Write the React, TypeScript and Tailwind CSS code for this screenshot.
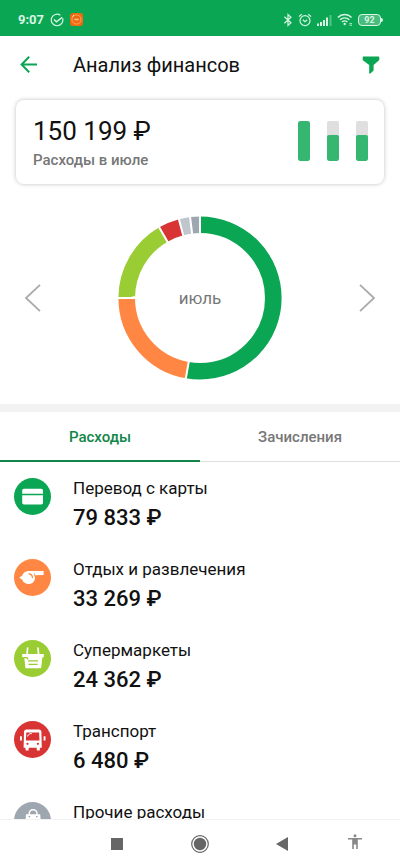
import { useState } from "react";
import type { ReactNode } from "react";

type Category = {
  name: string;
  amount?: string;
  color: string;
  icon: ReactNode;
};

const segments = [
  { color: "#0ba653", from: 0, to: 190 },
  { color: "#ff8743", from: 190, to: 270 },
  { color: "#9acc33", from: 270, to: 330 },
  { color: "#d93434", from: 330, to: 345 },
  { color: "#c0c6ce", from: 345, to: 353 },
  { color: "#9ea7b0", from: 353, to: 360 },
];

const months = [
  { id: "may", label: "Май", fill: 100 },
  { id: "june", label: "Июнь", fill: 64 },
  { id: "july", label: "Июль", fill: 64 },
];

const categories: Category[] = [
  {
    name: "Перевод с карты",
    amount: "79 833 ₽",
    color: "bg-[#0ba653]",
    icon: (
      <g fill="#fff">
        <path d="M10 10.7h17.2a1.8 1.8 0 0 1 1.8 1.8v3.3H8.2v-3.3a1.8 1.8 0 0 1 1.8-1.8z" />
        <path d="M8.2 17.3H29v7.4a1.8 1.8 0 0 1-1.8 1.8H10a1.8 1.8 0 0 1-1.8-1.8z" />
      </g>
    ),
  },
  {
    name: "Отдых и развлечения",
    amount: "33 269 ₽",
    color: "bg-[#ff8743]",
    icon: (
      <>
        <path
          d="M5.2 18.8 8.2 16.6A7 7 0 0 1 14.2 12H29.6v3.9l-8.8.4a6.6 6.6 0 0 1-12.7 4.2z"
          fill="#fff"
        />
        <path
          d="M14.6 14.6a4.6 4.6 0 0 1 3.9 4.4"
          fill="none"
          stroke="#ff8743"
          strokeWidth="1.3"
        />
        <path d="M20.4 14.3v3" stroke="#ff8743" strokeWidth="0.8" />
      </>
    ),
  },
  {
    name: "Супермаркеты",
    amount: "24 362 ₽",
    color: "bg-[#9acc33]",
    icon: (
      <>
        <path
          d="M13.6 8 13 15M24 8l.6 7"
          fill="none"
          stroke="#fff"
          strokeWidth="1.7"
          strokeLinecap="round"
        />
        <path
          d="M8.2 14h21.6v3.2h-1.4l-1.2 10.2a1 1 0 0 1-1 .9H12.4a1 1 0 0 1-1-.9L10.2 17.2h-2z"
          fill="#fff"
        />
        <path
          d="M9.4 17.6h3.6l1 1.8M14 20.8h10M14.4 24.4h9.2"
          fill="none"
          stroke="#9acc33"
          strokeWidth="1.3"
        />
      </>
    ),
  },
  {
    name: "Транспорт",
    amount: "6 480 ₽",
    color: "bg-[#d93434]",
    icon: (
      <>
        <path
          d="M12.6 8.5h12.2a2.6 2.6 0 0 1 2.6 2.6l.4 15.7h-1.9v1.6a1.2 1.2 0 0 1-1.2 1.2h-.8a1.2 1.2 0 0 1-1.2-1.2v-1.6h-8v1.6a1.2 1.2 0 0 1-1.2 1.2h-.8a1.2 1.2 0 0 1-1.2-1.2v-1.6H9.6L10 11.1a2.6 2.6 0 0 1 2.6-2.6zM6 15.2h1.9v4.2H6zM29.6 15.2h1.9v4.2h-1.9z"
          fill="#fff"
        />
        <path d="M12.3 11.4h12.8l.4 8.2H11.9z" fill="#d93434" />
        <path d="m13 15.4 3-2.8h1.8" fill="none" stroke="#fff" strokeWidth="1" />
        <circle cx="13.5" cy="22.8" r="1.1" fill="#d93434" />
        <circle cx="23.9" cy="22.8" r="1.1" fill="#d93434" />
      </>
    ),
  },
  {
    name: "Прочие расходы",
    color: "bg-[#9ea7b0]",
    icon: (
      <>
        <path d="M12 12.2h14.2L27.4 27H10.8z" fill="#fff" />
        <path
          d="M15.2 13.4v-1.8a3.9 3.9 0 0 1 7.8 0v1.8"
          fill="none"
          stroke="#fff"
          strokeWidth="1.5"
        />
        <path d="M14.6 14.6h1.6M22 14.6h1.6" stroke="#9ea7b0" strokeWidth="1.3" />
      </>
    ),
  },
];

function StatusBar() {
  return (
    <div className="flex h-9 shrink-0 items-center justify-between bg-[#0ba653] pr-[17px] pl-[18px] pt-[3px] text-[#d8f5e3]">
      <div className="flex items-center gap-1.5">
        <span className="text-[13px] leading-4 font-bold">9:07</span>
        <svg viewBox="0 0 14 14" className="size-3.5" fill="none" stroke="currentColor">
          <path d="M12.6 5.2A5.8 5.8 0 1 1 10.4 2.2" strokeWidth="1.2" />
          <path d="m4 6.6 2.4 2.2 5.8-4.4" strokeWidth="1.4" />
        </svg>
        <svg viewBox="0 0 13 13" className="size-[13px]">
          <rect width="13" height="13" rx="3" fill="#f0690f" />
          <circle cx="6.5" cy="6.5" r="4.6" fill="none" stroke="#ffb27c" strokeWidth="0.8" />
          <path d="M4.4 6.5h4.2" stroke="#ffc79e" strokeWidth="1.5" />
          <path d="m2.4 3.6 1.6-1.4" stroke="#fff" strokeWidth="0.9" />
        </svg>
      </div>
      <div className="flex items-center gap-[5px]">
        <svg viewBox="0 0 10 14" className="h-3.5 w-2.5" fill="none" stroke="currentColor">
          <path d="m1.4 3.8 6.6 6L5 12.4V1.6l3 2.6-6.6 6" strokeWidth="1.2" />
        </svg>
        <svg viewBox="0 0 14 14" className="size-3.5" fill="none" stroke="currentColor">
          <circle cx="7" cy="7.6" r="5" strokeWidth="1.2" />
          <path d="m4.8 6.8 2.2 2 2.2-2M.9 3.6l2.8-2.4M13.1 3.6l-2.8-2.4" strokeWidth="1.2" />
        </svg>
        <svg viewBox="0 0 15 12" className="h-3 w-[15px]" fill="currentColor">
          <path d="M0 9.5h2V12H0zM3 8h2v4H3zM6 6h2v6H6zM9 3.5h2V12H9z" />
          <path d="M12.5 1h2v11h-2z" opacity="0.35" />
        </svg>
        <svg viewBox="0 0 16 13" className="h-[13px] w-4" fill="none" stroke="currentColor">
          <path
            d="M.8 4.4a9.8 9.8 0 0 1 13.8 0M3 6.8a6.6 6.6 0 0 1 9.4 0M5.1 9a3.6 3.6 0 0 1 5.2 0"
            strokeWidth="1.4"
          />
          <circle cx="7.7" cy="11" r="1.2" fill="currentColor" stroke="none" />
          <path d="M12.4 10.6h2.6M12.4 12.2h2.6" strokeWidth="0.8" />
        </svg>
        <div className="flex items-center">
          <span className="flex h-3 w-[23px] items-center justify-center rounded-[4px] border border-current bg-white/25 pt-px text-[9px] leading-[10px] font-bold">
            92
          </span>
          <span className="h-1 w-0.5 rounded-r-sm bg-current" />
        </div>
      </div>
    </div>
  );
}

function Header() {
  return (
    <header className="flex h-[58px] shrink-0 items-center pr-5 pl-5">
      <button type="button" aria-label="Назад" className="mr-[35px] text-[#0ba653]">
        <svg viewBox="0 0 18 18" className="size-[18px]" fill="none" stroke="currentColor" strokeWidth="2">
          <path d="M17 8.5H2M9.2.7 1.6 8.5l7.6 7.8" />
        </svg>
      </button>
      <h1 className="flex-1 text-[20px] leading-6 text-[#111]">Анализ финансов</h1>
      <button type="button" aria-label="Фильтр" className="text-[#0ba653]">
        <svg viewBox="0 0 18 18" className="size-[18px]" fill="currentColor">
          <path d="M1.5.5h15a.8.8 0 0 1 .8.8v2.2c0 .4-.2.8-.5 1.1L11.6 9v5.6l-3.2 2.9c-.5.3-1.2.1-1.2-.5V9L1.2 4.6a1.4 1.4 0 0 1-.5-1.1V1.3a.8.8 0 0 1 .8-.8z" />
        </svg>
      </button>
    </header>
  );
}

function SummaryCard() {
  return (
    <section className="mx-4 mt-1.5 flex h-[84px] shrink-0 items-center justify-between rounded-lg bg-white pr-4 pl-[17px] shadow-[0_0_4px_rgba(0,0,0,0.25)]">
      <div className="pt-1">
        <div className="text-[26px] leading-8 text-[#111]">150 199 ₽</div>
        <div className="text-[15px] leading-[26px] font-medium text-[#777]">Расходы в июле</div>
      </div>
      <div className="flex gap-[17px] pb-0.5">
        {months.map((month) => (
          <div
            key={month.id}
            title={month.label}
            className="flex h-10 w-3 flex-col justify-end overflow-hidden rounded-xs bg-[#dfdfdf]"
          >
            <div
              className="rounded-xs bg-[#36b771]"
              style={{ height: `${month.fill}%` }}
            />
          </div>
        ))}
      </div>
    </section>
  );
}

function Donut() {
  return (
    <div className="grid size-[164px] place-items-center">
      <svg viewBox="0 0 164 164" className="col-start-1 row-start-1 size-full -rotate-90">
        {segments.map((segment) => (
          <circle
            key={segment.color}
            cx="82"
            cy="82"
            r="73.3"
            fill="none"
            stroke={segment.color}
            strokeWidth="16.6"
            pathLength="360"
            strokeDasharray={`${segment.to - segment.from} 360`}
            strokeDashoffset={-segment.from}
          />
        ))}
        {segments.map((segment) => (
          <path
            key={segment.color}
            d="M145 82h19"
            stroke="#fff"
            strokeWidth="2"
            transform={`rotate(${segment.from} 82 82)`}
          />
        ))}
      </svg>
      <span className="col-start-1 row-start-1 text-[17px] leading-6 text-[#777]">июль</span>
    </div>
  );
}

function MonthChart() {
  return (
    <section className="mt-8 flex shrink-0 items-center justify-between px-6 pb-6">
      <button type="button" aria-label="Предыдущий месяц">
        <svg viewBox="0 0 17 28" className="h-7 w-[17px]" fill="none" stroke="#aaa" strokeWidth="1.8">
          <path d="M16 .8 2 14l14 13.2" />
        </svg>
      </button>
      <Donut />
      <button type="button" aria-label="Следующий месяц">
        <svg viewBox="0 0 17 28" className="h-7 w-[17px]" fill="none" stroke="#aaa" strokeWidth="1.8">
          <path d="m1 .8 14 13.2L1 27.2" />
        </svg>
      </button>
    </section>
  );
}

function Tabs() {
  const [active, setActive] = useState("Расходы");

  return (
    <div role="tablist" className="flex h-[50px] shrink-0">
      {["Расходы", "Зачисления"].map((tab) => (
        <button
          key={tab}
          type="button"
          role="tab"
          aria-selected={tab === active}
          onClick={() => setActive(tab)}
          className={
            tab === active
              ? "flex-1 border-b-2 border-[#12854a] pt-0.5 text-[15px] font-medium text-[#12854a]"
              : "flex-1 border-b border-[#ddd] pt-0.5 text-[15px] font-medium text-[#777]"
          }
        >
          {tab}
        </button>
      ))}
    </div>
  );
}

function CategoryRow({ name, amount, color, icon }: Category) {
  return (
    <li className="flex gap-[22px] pr-4 pb-[25px] pl-3.5">
      <div className={`mt-0.5 size-[37px] shrink-0 rounded-full ${color}`}>
        <svg viewBox="0 0 37 37" className="size-full">
          {icon}
        </svg>
      </div>
      <div className="text-[#111]">
        <div className="text-[17px] leading-6">{name}</div>
        {amount && (
          <div className="pt-1 text-[22px] leading-7 font-medium">{amount}</div>
        )}
      </div>
    </li>
  );
}

function SystemNav() {
  return (
    <nav className="grid h-12 shrink-0 grid-cols-[1fr_86px_79px_74px_38px] items-center border-t border-[#f3f3f3] bg-white text-[#666]">
      <button type="button" aria-label="Недавние" className="justify-self-end">
        <svg viewBox="0 0 12 12" className="size-3" fill="currentColor">
          <path d="M0 0h12v12H0z" />
        </svg>
      </button>
      <button type="button" aria-label="Домой" className="justify-self-end">
        <svg viewBox="0 0 18 18" className="size-[18px]">
          <circle cx="9" cy="9" r="8.3" fill="none" stroke="currentColor" strokeWidth="1.2" />
          <circle cx="9" cy="9" r="6.2" fill="currentColor" />
        </svg>
      </button>
      <button type="button" aria-label="Назад" className="justify-self-end">
        <svg viewBox="0 0 12 14" className="h-3.5 w-3" fill="currentColor">
          <path d="M12 0v14L0 7z" />
        </svg>
      </button>
      <button
        type="button"
        aria-label="Специальные возможности"
        className="justify-self-end pb-1 text-[#888]"
      >
        <svg viewBox="0 0 14 16" className="h-4 w-3.5" fill="currentColor">
          <circle cx="7" cy="1.8" r="1.5" />
          <path d="M0 4h14v1.5H9.8V15H8.2v-4.5H5.8V15H4.2V5.5H0z" />
        </svg>
      </button>
    </nav>
  );
}

export default function App() {
  return (
    <div className="flex h-dvh flex-col bg-white font-[Roboto,'Noto_Sans',sans-serif]">
      <StatusBar />
      <Header />
      <SummaryCard />
      <MonthChart />
      <div className="h-2 shrink-0 bg-[#f3f3f3]" />
      <Tabs />
      <ul className="min-h-0 flex-1 overflow-y-auto pt-3.5 [scrollbar-width:none]">
        {categories.map((category) => (
          <CategoryRow key={category.name} {...category} />
        ))}
      </ul>
      <SystemNav />
    </div>
  );
}
